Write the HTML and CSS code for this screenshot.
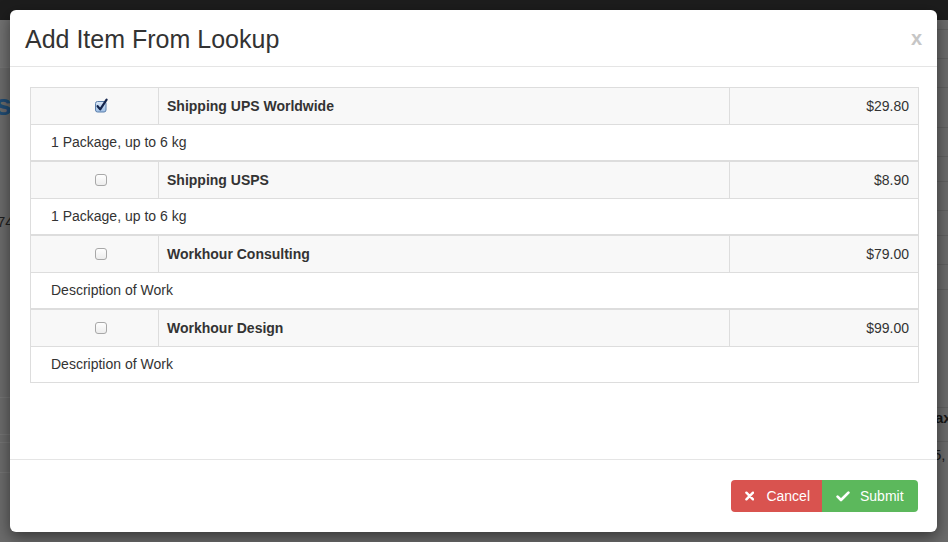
FILE: index.html
```html
<!DOCTYPE html>
<html lang="en">
<head>
<meta charset="utf-8">
<title>Add Item From Lookup</title>
<link rel="stylesheet" href="styles.css">
</head>
<body>
<div class="page">
  <div class="navbar"></div>
  <div class="bg">
    <div class="bg-left">
      <div class="bgl bgl-1"></div>
      <div class="bgl bgl-2"></div>
      <div class="bg-heading">sc</div>
      <div class="bgl bgl-3"></div>
      <div class="bg-num">74</div>
      <div class="bgl bgl-4"></div>
      <div class="bgl bgl-5"></div>
      <div class="bgl bgl-6"></div>
      <div class="bgl bgl-7"></div>
    </div>
    <div class="bg-right">
      <div class="bgr bgr-a"></div>
      <div class="bgr"></div>
      <div class="bgr"></div>
      <div class="bgr bgr-b"></div>
      <div class="bgr"></div>
      <div class="bgr bgr-c"></div>
      <div class="bgr"></div>
      <div class="bgr bgr-c"></div>
      <div class="bgr"></div>
      <div class="bgr bgr-c"></div>
      <div class="bgr bgr-d"></div>
      <div class="bg-bold">ax</div>
      <div class="bgr bgr-e"></div>
      <div class="bg-small">5,</div>
    </div>
  </div>
</div>

<div class="modal">
  <div class="modal-header">
    <h4 class="modal-title">Add Item From Lookup</h4>
    <span class="close">x</span>
  </div>
  <div class="modal-body">
    <table class="lookup">
      <colgroup>
        <col class="col-check">
        <col class="col-name">
        <col class="col-price">
      </colgroup>
      <tbody>
        <tr class="item-row">
          <td class="check-cell">
            <svg class="cb" width="15" height="15" viewBox="0 0 15 15">
              <defs>
                <linearGradient id="cbChecked" x1="0" y1="0" x2="0" y2="1">
                  <stop offset="0" stop-color="#dbe8f7"/>
                  <stop offset="1" stop-color="#9ebfe6"/>
                </linearGradient>
              </defs>
              <rect x="1.5" y="3.5" width="10.5" height="10.5" rx="2" fill="url(#cbChecked)" stroke="#5b7fab"/>
              <path d="M3.6 8.2 L6.2 11.4 L12.6 1.6" fill="none" stroke="#14254d" stroke-width="2.2" stroke-linecap="round" stroke-linejoin="round"/>
            </svg>
          </td>
          <td class="name-cell">Shipping UPS Worldwide</td>
          <td class="price-cell">$29.80</td>
        </tr>
        <tr class="desc-row"><td colspan="3">1 Package, up to 6 kg</td></tr>
      </tbody>
      <tbody>
        <tr class="item-row">
          <td class="check-cell">
            <svg class="cb" width="15" height="15" viewBox="0 0 15 15">
              <defs>
                <linearGradient id="cbEmpty1" x1="0" y1="0" x2="0" y2="1">
                  <stop offset="0" stop-color="#ffffff"/>
                  <stop offset="1" stop-color="#ececec"/>
                </linearGradient>
              </defs>
              <rect x="1.5" y="2.5" width="11" height="11" rx="2.5" fill="url(#cbEmpty1)" stroke="#a8a8a8"/>
            </svg>
          </td>
          <td class="name-cell">Shipping USPS</td>
          <td class="price-cell">$8.90</td>
        </tr>
        <tr class="desc-row"><td colspan="3">1 Package, up to 6 kg</td></tr>
      </tbody>
      <tbody>
        <tr class="item-row">
          <td class="check-cell">
            <svg class="cb" width="15" height="15" viewBox="0 0 15 15">
              <rect x="1.5" y="2.5" width="11" height="11" rx="2.5" fill="url(#cbEmpty1)" stroke="#a8a8a8"/>
            </svg>
          </td>
          <td class="name-cell">Workhour Consulting</td>
          <td class="price-cell">$79.00</td>
        </tr>
        <tr class="desc-row"><td colspan="3">Description of Work</td></tr>
      </tbody>
      <tbody>
        <tr class="item-row">
          <td class="check-cell">
            <svg class="cb" width="15" height="15" viewBox="0 0 15 15">
              <rect x="1.5" y="2.5" width="11" height="11" rx="2.5" fill="url(#cbEmpty1)" stroke="#a8a8a8"/>
            </svg>
          </td>
          <td class="name-cell">Workhour Design</td>
          <td class="price-cell">$99.00</td>
        </tr>
        <tr class="desc-row"><td colspan="3">Description of Work</td></tr>
      </tbody>
    </table>
  </div>
  <div class="modal-footer">
    <div class="btn-group">
      <button class="btn btn-danger" type="button">
        <svg class="icon" width="10" height="10" viewBox="0 0 10 10">
          <path d="M1.5 1.5 L8.5 8.5 M8.5 1.5 L1.5 8.5" stroke="#fff" stroke-width="2.6" stroke-linecap="round"/>
        </svg>
        <span>Cancel</span>
      </button>
      <button class="btn btn-success" type="button">
        <svg class="icon" width="14" height="11" viewBox="0 0 14 11">
          <path d="M1.6 5.6 L5 9 L12.4 1.6" fill="none" stroke="#fff" stroke-width="2.7" stroke-linecap="round" stroke-linejoin="round"/>
        </svg>
        <span>Submit</span>
      </button>
    </div>
  </div>
</div>
</body>
</html>
```

FILE: styles.css
```css
* { box-sizing: border-box; }

html, body {
  margin: 0;
  padding: 0;
  width: 948px;
  height: 542px;
  overflow: hidden;
}

body {
  font-family: "Liberation Sans", Arial, Helvetica, sans-serif;
  font-size: 14px;
  line-height: 20px;
  color: #333;
  background: #6c6c6c;
}

/* ---------- background page (under the modal) ---------- */
.page {
  display: flex;
  flex-direction: column;
  height: 542px;
}

.navbar {
  height: 20px;
  background: #1d1d1d;
  flex: none;
}

.bg {
  flex: 1;
  display: flex;
  justify-content: space-between;
  background: #6b6b6b;
}

.bg-left {
  width: 12px;
  overflow: hidden;
  white-space: nowrap;
}

.bgl { border-bottom: 1px solid #747474; }
.bgl-1 { height: 48px; background: #717171; }
.bgl-2 { height: 22px; border-bottom: 0; }
.bgl-3 { height: 92px; border-bottom: 0; }
.bgl-4 { height: 166px; }
.bgl-5 { height: 37px; }
.bgl-6 { height: 8px; }
.bgl-7 { height: 30px; }

.bg-heading {
  height: 30px;
  line-height: 30px;
  font-size: 30px;
  font-weight: bold;
  color: #1f4c74;
  margin-left: -5px;
}

.bg-num {
  height: 20px;
  line-height: 20px;
  font-size: 15px;
  color: #1e1e1e;
  margin-left: -3px;
}

.bg-right {
  width: 12px;
  overflow: hidden;
  white-space: nowrap;
}

.bgr {
  height: 29px;
  border-bottom: 1px solid #606060;
}
.bgr-a { height: 10px; }
.bgr-b { height: 40px; }
.bgr-c { height: 25px; }
.bgr-d { height: 118px; }
.bgr-e { height: 14px; }

.bg-bold {
  height: 20px;
  line-height: 20px;
  font-size: 15px;
  font-weight: bold;
  color: #141414;
  margin-left: -1px;
}

.bg-small {
  height: 26px;
  line-height: 26px;
  font-size: 15px;
  color: #1a1a1a;
  margin-left: -3px;
}

/* ---------- modal ---------- */
.modal {
  position: absolute;
  top: 10px;
  left: 10px;
  width: 927px;
  height: 522px;
  background: #fff;
  border-radius: 6px;
  box-shadow: 0 5px 15px rgba(0, 0, 0, 0.5);
  display: flex;
  flex-direction: column;
}

.modal-header {
  display: flex;
  justify-content: space-between;
  align-items: flex-start;
  padding: 15px 15px 14px 15px;
  height: 57px;
  border-bottom: 1px solid #e5e5e5;
  flex: none;
}

.modal-title {
  margin: 0;
  font-size: 25px;
  line-height: 28px;
  font-weight: normal;
  color: #333;
}

.close {
  font-size: 20px;
  font-weight: bold;
  line-height: 20px;
  color: #c6c6c6;
  margin-top: 3px;
}

.modal-body {
  flex: 1;
  padding: 20px 19px 0 20px;
}

/* ---------- lookup table ---------- */
.lookup {
  width: 888px;
  border-collapse: collapse;
  table-layout: fixed;
  border: 1px solid #ddd;
}

.col-check { width: 128px; }
.col-name { width: 571px; }
.col-price { width: 189px; }

.lookup tbody + tbody {
  border-top: 2px solid #ddd;
}

.lookup td {
  padding: 8px;
  line-height: 20px;
  border: 1px solid #ddd;
  vertical-align: middle;
}

.item-row td {
  background: #f8f8f8;
  height: 36px;
}

.desc-row td {
  background: #fff;
  padding: 7px 20px 8px 20px;
  height: 35px;
}

.check-cell {
  text-align: center;
  padding-left: 21px !important;
}

.cb {
  display: inline-block;
  vertical-align: middle;
  margin-top: -4px;
}

.name-cell {
  font-weight: bold;
  color: #333;
}

.price-cell {
  text-align: right;
  padding-right: 9px !important;
}

/* ---------- footer ---------- */
.modal-footer {
  flex: none;
  display: flex;
  justify-content: flex-end;
  padding: 20px 19px 20px 20px;
  border-top: 1px solid #e5e5e5;
}

.btn-group {
  display: flex;
}

.btn {
  display: flex;
  align-items: center;
  height: 32px;
  border: 0;
  margin: 0;
  font-family: "Liberation Sans", Arial, Helvetica, sans-serif;
  font-size: 14px;
  line-height: 20px;
  color: #fff;
  cursor: pointer;
}

.btn-danger {
  background: #d9534f;
  border-radius: 4px 0 0 4px;
  padding: 0 12px 0 14px;
  width: 91px;
}

.btn-danger .icon { margin-right: 12px; }

.btn-success {
  background: #5cb85c;
  border-radius: 0 4px 4px 0;
  padding: 0 13px 0 14px;
  width: 96px;
}

.btn-success .icon { margin-right: 10px; }
```
